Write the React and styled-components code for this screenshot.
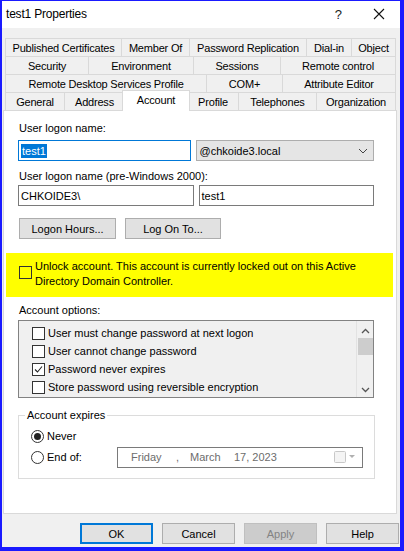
import styled, { createGlobalStyle } from "styled-components";

const GlobalStyle = createGlobalStyle`
  html, body {
    margin: 0;
    padding: 0;
    background: #ffffff;
  }
  * {
    box-sizing: border-box;
  }
`;

const tabRows = [
  [
    { label: "Published Certificates", width: 116 },
    { label: "Member Of", width: 68 },
    { label: "Password Replication", width: 117 },
    { label: "Dial-in", width: 45 },
    { label: "Object", width: 45 },
  ],
  [
    { label: "Security", width: 83 },
    { label: "Environment", width: 105 },
    { label: "Sessions", width: 87 },
    { label: "Remote control", width: 116 },
  ],
  [
    { label: "Remote Desktop Services Profile", width: 201 },
    { label: "COM+", width: 76 },
    { label: "Attribute Editor", width: 114 },
  ],
  [
    { label: "General", width: 59 },
    { label: "Address", width: 60 },
    { label: "Account", width: 64, active: true },
    { label: "Profile", width: 50 },
    { label: "Telephones", width: 78 },
    { label: "Organization", width: 80 },
  ],
];

const accountOptions = [
  { label: "User must change password at next logon", checked: false },
  { label: "User cannot change password", checked: false },
  { label: "Password never expires", checked: true },
  { label: "Store password using reversible encryption", checked: false },
];

function App() {
  return (
    <>
      <GlobalStyle />
      <Window>
        <TitleBar>
          <TitleText>test1 Properties</TitleText>
          <TitleButtons>
            <HelpGlyph>?</HelpGlyph>
            <CloseGlyph width="12" height="12" viewBox="0 0 12 12">
              <path d="M1 1 L11 11 M11 1 L1 11" stroke="#111" strokeWidth="1.1" />
            </CloseGlyph>
          </TitleButtons>
        </TitleBar>

        <Body>
          <TabStrip>
            {tabRows.map((row, i) => (
              <TabRow key={i}>
                {row.map((tab) => (
                  <Tab key={tab.label} $width={tab.width} $active={tab.active}>
                    {tab.label}
                  </Tab>
                ))}
              </TabRow>
            ))}
          </TabStrip>

          <Panel>
            <FieldLabel>User logon name:</FieldLabel>
            <FieldRow $top={4}>
              <TextBox $focused>
                <Selected>test1</Selected>
              </TextBox>
              <ComboBox>
                <span>@chkoide3.local</span>
                <svg width="10" height="6" viewBox="0 0 10 6">
                  <path d="M1 1 L5 5 L9 1" fill="none" stroke="#444" strokeWidth="1" />
                </svg>
              </ComboBox>
            </FieldRow>

            <FieldLabel $top={7}>User logon name (pre-Windows 2000):</FieldLabel>
            <FieldRow $top={1}>
              <TextBox>CHKOIDE3\</TextBox>
              <TextBox>test1</TextBox>
            </FieldRow>

            <ButtonRow>
              <PushButton $width={97}>Logon Hours...</PushButton>
              <PushButton $width={96}>Log On To...</PushButton>
            </ButtonRow>

            <UnlockBox>
              <CheckBox $transparent />
              <UnlockText>
                Unlock account. This account is currently locked out on this Active
                Directory Domain Controller.
              </UnlockText>
            </UnlockBox>

            <FieldLabel $top={5}>Account options:</FieldLabel>
            <ListBox>
              <ListItems>
                {accountOptions.map((opt) => (
                  <ListItem key={opt.label}>
                    <CheckBox $checked={opt.checked}>
                      {opt.checked && (
                        <svg width="9" height="9" viewBox="0 0 9 9">
                          <path d="M1 4.5 L3.5 7 L8 1.5" fill="none" stroke="#222" strokeWidth="1.1" />
                        </svg>
                      )}
                    </CheckBox>
                    {opt.label}
                  </ListItem>
                ))}
              </ListItems>
              <ScrollBar>
                <svg width="9" height="6" viewBox="0 0 9 6">
                  <path d="M1 5 L4.5 1.5 L8 5" fill="none" stroke="#555" strokeWidth="1.3" />
                </svg>
                <Thumb />
                <ScrollSpacer />
                <svg width="9" height="6" viewBox="0 0 9 6">
                  <path d="M1 1 L4.5 4.5 L8 1" fill="none" stroke="#555" strokeWidth="1.3" />
                </svg>
              </ScrollBar>
            </ListBox>

            <GroupBox>
              <Legend>Account expires</Legend>
              <RadioRow>
                <Radio $checked />
                Never
              </RadioRow>
              <RadioRow>
                <Radio />
                <RadioLabel>End of:</RadioLabel>
                <DatePicker>
                  <DatePart $width={45}>Friday</DatePart>
                  <DatePart $width={14}>,</DatePart>
                  <DatePart $width={44}>March</DatePart>
                  <DatePart>17, 2023</DatePart>
                  <DateSpacer />
                  <svg width="22" height="12" viewBox="0 0 22 12">
                    <rect x="0.5" y="0.5" width="11" height="11" rx="1" fill="#f4f4f4" stroke="#c8c8c8" />
                    <path d="M15 4 L21 4 L18 7 Z" fill="#b0b0b0" />
                  </svg>
                </DatePicker>
              </RadioRow>
            </GroupBox>
          </Panel>

          <Footer>
            <DialogButton $default>OK</DialogButton>
            <DialogButton>Cancel</DialogButton>
            <DialogButton $disabled>Apply</DialogButton>
            <DialogButton>Help</DialogButton>
          </Footer>
        </Body>
      </Window>
    </>
  );
}

const Window = styled.div`
  width: 404px;
  height: 551px;
  border-style: solid;
  border-color: #1a1aff;
  border-width: 1px 4px 4px 2px;
  display: flex;
  flex-direction: column;
  font-family: "Liberation Sans", Arial, sans-serif;
  font-size: 11px;
  color: #000;
  background: #f0f0f0;
`;

const TitleBar = styled.div`
  height: 27px;
  flex-shrink: 0;
  background: #ffffff;
  display: flex;
  align-items: center;
  justify-content: space-between;
  padding: 0 15px 1px 4px;
`;

const TitleText = styled.span`
  font-size: 12px;
  letter-spacing: -0.2px;
`;

const TitleButtons = styled.div`
  display: flex;
  align-items: center;
  gap: 31px;
`;

const HelpGlyph = styled.span`
  font-size: 13px;
  color: #222;
`;

const CloseGlyph = styled.svg`
  display: block;
`;

const Body = styled.div`
  flex: 1;
  display: flex;
  flex-direction: column;
  padding: 10px 3px 0 1px;
`;

const TabStrip = styled.div`
  display: flex;
  flex-direction: column;
  padding: 0 1px 0 2px;
  position: relative;
  z-index: 1;
`;

const TabRow = styled.div`
  display: flex;
  height: 18px;
`;

const Tab = styled.div`
  width: ${(p) => p.$width}px;
  display: flex;
  align-items: center;
  justify-content: center;
  white-space: nowrap;
  letter-spacing: -0.2px;
  border: 1px solid #d9d9d9;
  border-right-width: 0;
  border-bottom-width: 0;
  background: #f0f0f0;

  &:last-child {
    border-right-width: 1px;
  }

  ${(p) =>
    p.$active &&
    `
    background: #ffffff;
    margin: -2px -2px -1px -2px;
    width: ${p.$width + 4}px;
    padding-bottom: 3px;
    border-right-width: 1px;
    position: relative;
    z-index: 2;
    & + div { border-left-width: 0; }
  `}
`;

const Panel = styled.div`
  height: 404px;
  flex-shrink: 0;
  background: #ffffff;
  border: 1px solid #d9d9d9;
  padding: 9px 22px 0 14px;
  display: flex;
  flex-direction: column;
`;

const FieldLabel = styled.div`
  margin-top: ${(p) => p.$top || 0}px;
  margin-left: 1px;
  height: 16px;
  line-height: 16px;
`;

const FieldRow = styled.div`
  display: flex;
  gap: 5px;
  margin-top: ${(p) => p.$top}px;
`;

const TextBox = styled.div`
  flex: 1;
  height: 21px;
  border: 1px solid ${(p) => (p.$focused ? "#0078d7" : "#7a7a7a")};
  background: #fff;
  display: flex;
  align-items: center;
  padding-left: 2px;
`;

const Selected = styled.span`
  background: #0078d7;
  color: #fff;
  padding: 0 1px;
  line-height: 14px;
`;

const ComboBox = styled.div`
  flex: 1;
  height: 21px;
  border: 1px solid #adadad;
  background: #e5e5e5;
  display: flex;
  align-items: center;
  justify-content: space-between;
  padding: 0 5px 0 3px;
`;

const ButtonRow = styled.div`
  display: flex;
  gap: 9px;
  margin: 12px 0 0 1px;
`;

const PushButton = styled.div`
  width: ${(p) => p.$width}px;
  height: 21px;
  border: 1px solid #adadad;
  background: #e1e1e1;
  display: flex;
  align-items: center;
  justify-content: center;
`;

const UnlockBox = styled.div`
  margin: 14px -19px 0 -12px;
  height: 44px;
  flex-shrink: 0;
  background: #ffff00;
  display: flex;
  align-items: flex-start;
  gap: 3px;
  padding: 13px 0 0 13px;
`;

const UnlockText = styled.div`
  line-height: 15px;
  margin-top: -7px;
`;

const CheckBox = styled.div`
  width: 13px;
  height: 13px;
  flex-shrink: 0;
  border: 1px solid #333;
  background: ${(p) => (p.$transparent ? "transparent" : "#fff")};
  display: flex;
  align-items: center;
  justify-content: center;
`;

const ListBox = styled.div`
  margin-top: 2px;
  height: 78px;
  flex-shrink: 0;
  border: 1px solid #828282;
  background: #f0f0f0;
  display: flex;
`;

const ListItems = styled.div`
  flex: 1;
  padding: 3px 0 0 13px;
  display: flex;
  flex-direction: column;
`;

const ListItem = styled.div`
  height: 18px;
  display: flex;
  align-items: center;
  gap: 3px;
`;

const ScrollBar = styled.div`
  width: 17px;
  border-left: 1px solid #e2e2e2;
  display: flex;
  flex-direction: column;
  align-items: center;
  padding: 7px 0 4px;
`;

const Thumb = styled.div`
  width: 15px;
  height: 17px;
  margin-top: 4px;
  background: #cdcdcd;
`;

const ScrollSpacer = styled.div`
  flex: 1;
`;

const GroupBox = styled.div`
  margin-top: 17px;
  height: 64px;
  flex-shrink: 0;
  width: 357px;
  border: 1px solid #dcdcdc;
  position: relative;
  padding: 12px 0 0 12px;
  display: flex;
  flex-direction: column;
  gap: 5px;
`;

const Legend = styled.span`
  position: absolute;
  top: -8px;
  left: 6px;
  padding: 0 2px;
  background: #fff;
  line-height: 14px;
`;

const RadioRow = styled.div`
  display: flex;
  align-items: center;
  gap: 3px;
  height: 16px;
`;

const Radio = styled.div`
  width: 13px;
  height: 13px;
  border-radius: 50%;
  border: 1px solid #333;
  background: #fff;
  position: relative;

  ${(p) =>
    p.$checked &&
    `
    &::after {
      content: "";
      position: absolute;
      left: 2px;
      top: 2px;
      width: 7px;
      height: 7px;
      border-radius: 50%;
      background: #222;
    }
  `}
`;

const RadioLabel = styled.span`
  width: 67px;
`;

const DatePicker = styled.div`
  width: 246px;
  height: 21px;
  border: 1px solid #7a7a7a;
  background: #fff;
  display: flex;
  align-items: center;
  padding: 0 6px 0 13px;
  color: #6d6d6d;
`;

const DatePart = styled.span`
  width: ${(p) => (p.$width ? `${p.$width}px` : "auto")};
`;

const DateSpacer = styled.div`
  flex: 1;
`;

const Footer = styled.div`
  display: flex;
  justify-content: flex-end;
  gap: 9px;
  padding: 9px 0 0 0;
  margin-right: -2px;
`;

const DialogButton = styled.div`
  width: 73px;
  height: 21px;
  display: flex;
  align-items: center;
  justify-content: center;
  background: ${(p) => (p.$disabled ? "#cccccc" : "#e1e1e1")};
  color: ${(p) => (p.$disabled ? "#838383" : "#000")};
  border: ${(p) =>
    p.$default ? "2px solid #0078d7" : `1px solid ${p.$disabled ? "#bfbfbf" : "#adadad"}`};
`;

export default App;
